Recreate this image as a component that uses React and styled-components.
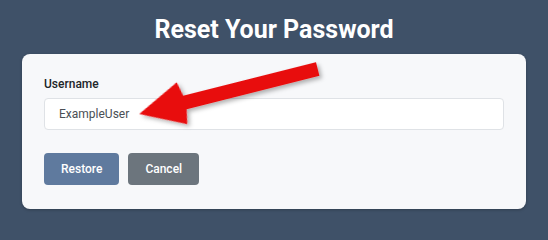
import React from "react";
import styled, { createGlobalStyle } from "styled-components";

const GlobalStyle = createGlobalStyle`
  html, body {
    margin: 0;
    padding: 0;
    background: #3f5168;
    font-family: Roboto, "Liberation Sans", Arial, sans-serif;
  }
  * { box-sizing: border-box; }
`;

const Page = styled.div`
  position: relative;
  min-height: 100vh;
  padding: 15px 22px 0 22px;
  display: flex;
  flex-direction: column;
  align-items: stretch;
`;

const Title = styled.h1`
  margin: 0 0 9px 0;
  font-size: 25px;
  line-height: 30px;
  font-weight: 700;
  color: #ffffff;
  text-align: center;
`;

const Card = styled.div`
  background: #f7f8fa;
  border-radius: 8px;
  box-shadow: 0 1px 3px rgba(0, 0, 0, 0.25);
  padding: 21px 22px 24px 22px;
  display: flex;
  flex-direction: column;
`;

const Label = styled.label`
  font-size: 12px;
  line-height: 18px;
  font-weight: 500;
  color: #212529;
  margin-bottom: 5px;
`;

const Input = styled.input`
  height: 32px;
  width: 100%;
  border: 1px solid #dfe2e6;
  border-radius: 4px;
  background: #ffffff;
  padding: 0 14px;
  font-family: Roboto, "Liberation Sans", Arial, sans-serif;
  font-size: 12px;
  color: #4a4f55;
  outline: none;
`;

const Actions = styled.div`
  display: flex;
  gap: 9px;
  margin-top: 23px;
`;

const Button = styled.button`
  height: 32px;
  padding: 0 17px;
  border: none;
  border-radius: 4px;
  background: ${(p) => (p.$variant === "secondary" ? "#6c757d" : "#5f7a9e")};
  color: #ffffff;
  font-family: Roboto, "Liberation Sans", Arial, sans-serif;
  font-size: 12px;
  font-weight: 500;
  cursor: pointer;
`;

const ArrowLayer = styled.svg`
  position: absolute;
  left: 0;
  top: 0;
  width: 548px;
  height: 239px;
  pointer-events: none;
  overflow: visible;
`;

function Arrow() {
  return (
    <ArrowLayer viewBox="0 0 548 239">
      <defs>
        <filter id="arrowShadow" x="-20%" y="-50%" width="140%" height="200%">
          <feDropShadow dx="2" dy="3" stdDeviation="2" floodColor="#000" floodOpacity="0.3" />
        </filter>
      </defs>
      <g transform="translate(139.3 114) rotate(-14.16)" filter="url(#arrowShadow)">
        <polygon
          points="0,0 44,-21.5 47,-7 184,-7 184,7 47,7 44,21.5"
          fill="#e8090b"
        />
      </g>
    </ArrowLayer>
  );
}

export default function App() {
  return (
    <>
      <GlobalStyle />
      <Page>
        <Title>Reset Your Password</Title>
        <Card>
          <Label htmlFor="username">Username</Label>
          <Input id="username" defaultValue="ExampleUser" />
          <Actions>
            <Button>Restore</Button>
            <Button $variant="secondary">Cancel</Button>
          </Actions>
        </Card>
        <Arrow />
      </Page>
    </>
  );
}
